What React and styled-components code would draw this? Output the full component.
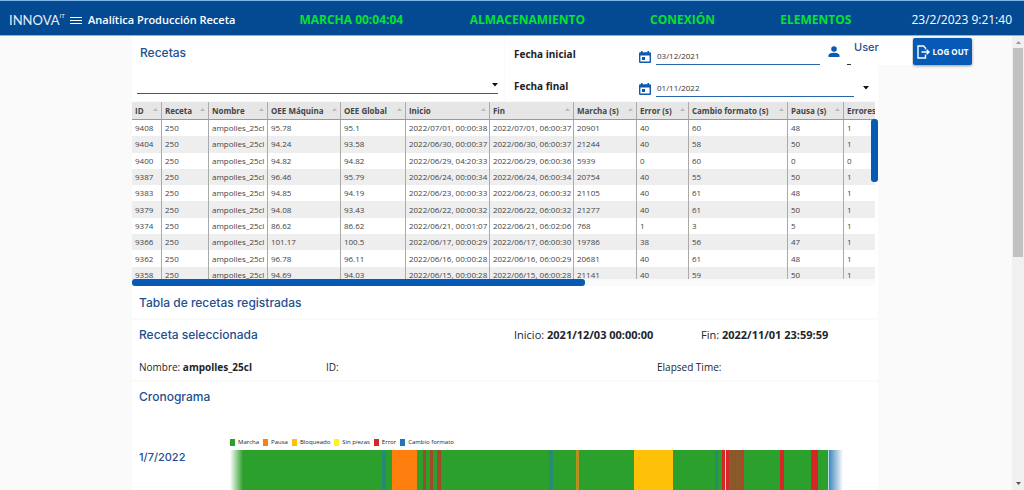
import React from "react";
import styled, { createGlobalStyle } from "styled-components";

const sans = '"Open Sans", "Noto Sans", sans-serif';
const display = 'Inter, "Open Sans", sans-serif';

const GlobalStyle = createGlobalStyle`
  *, *::before, *::after { box-sizing: border-box; }
  body { margin: 0; background: #fafafa; font-family: ${sans}; font-size: 11px; color: #212529; }
  h1, h2, p, dl, dd { margin: 0; }
`;

const Page = styled.div`
  display: flex;
  flex-direction: column;
  height: 100vh;
`;

const TopBar = styled.header`
  display: flex;
  align-items: center;
  flex: none;
  height: 36px;
  padding: 4px 12px 0 9px;
  background: #034a92;
  border-top: 1px solid #7fb4e6;
  border-bottom: 1px solid #7fb4e6;
  color: #fff;
`;

const Logo = styled.a`
  display: flex;
  align-items: flex-start;
  width: 55px;
  color: #e6eef8;
  font: 400 13px/16px Lato, sans-serif;
  text-decoration: none;
  white-space: nowrap;
`;

const LogoMark = styled.small`
  font-size: 6px;
  line-height: 8px;
`;

const MenuButton = styled.button`
  display: flex;
  width: 24px;
  padding: 0 6px;
  border: 0;
  background: none;
  color: #fff;
`;

const PageTitle = styled.h1`
  flex: none;
  font-size: 11px;
  font-weight: 600;
  line-height: 16px;
`;

const StatusBar = styled.nav`
  display: grid;
  grid-template-columns: 170fr 180fr 130fr 131fr;
  flex: 1;
  padding-left: 64px;
`;

const Status = styled.span`
  color: #05e32f;
  font-size: 12px;
  font-weight: 700;
  line-height: 16px;
  white-space: nowrap;
`;

const Clock = styled.time`
  font-size: 12px;
  line-height: 16px;
`;

const Body = styled.div`
  position: relative;
  display: flex;
  flex: 1;
  min-height: 0;
`;

const Scroller = styled.div`
  flex: 1;
  min-width: 0;
  padding: 0 134px 0 132px;
  overflow: auto;
  scrollbar-width: none;
`;

const Content = styled.main`
  display: flex;
  flex-direction: column;
  gap: 2px;
`;

const Card = styled.section`
  background: #fff;
`;

const Filters = styled.div`
  display: grid;
  grid-template-columns: 372fr 373fr;
  gap: 1px;
  height: 64px;
`;

const FilterCard = styled(Card)`
  display: flex;
  flex-direction: column;
  justify-content: space-between;
  padding: 9px 6px 7px 5px;
`;

const Title = styled.h2`
  color: #234f8f;
  font: 500 12px/16px ${display};
`;

const FilterTitle = styled(Title)`
  padding-left: 3px;
`;

const SelectBox = styled.div`
  display: flex;
  align-items: center;
  border-bottom: 1px solid #555;
`;

const RecipeSelect = styled.select`
  appearance: none;
  flex: 1;
  height: 17px;
  border: 0;
  background: none;
  font: 11px ${sans};
`;

const DateCard = styled(Card)`
  display: flex;
  flex-direction: column;
  gap: 13px;
  padding: 10px 6px 4px 9px;
`;

const DateRow = styled.div`
  display: flex;
  align-items: flex-start;
  height: 19px;
`;

const DateLabel = styled.label`
  width: 125px;
  color: #222;
  font-size: 10px;
  font-weight: 700;
  line-height: 16px;
`;

const CalendarIcon = styled.svg`
  width: 12px;
  height: 14px;
  margin: 4px 5px 0 0;
  fill: #0b5ab0;
`;

const DateInput = styled.input`
  flex: 1;
  min-width: 0;
  height: 19px;
  margin-right: ${(p) => (p.$short ? "52px" : "9px")};
  padding: 0 1px;
  border: 0;
  border-bottom: 1px solid #2865ab;
  background: none;
  color: #333;
  font: 8px ${sans};
`;

const Caret = styled.svg`
  width: 6px;
  height: 4px;
  margin: ${(p) => (p.$low ? "8px 3px 0 0" : "0")};
  fill: #111;
`;

const UserPanel = styled.aside`
  position: absolute;
  top: 1px;
  right: 52px;
  display: flex;
  align-items: flex-start;
  gap: 1px;
`;

const User = styled.div`
  position: relative;
  display: flex;
  align-items: flex-start;
  width: 84px;
  height: 28px;
  background: #fff;
  color: #234f8f;
  font: 500 11px/20px ${display};
  &::after {
    position: absolute;
    bottom: 0;
    left: 19px;
    width: 4px;
    height: 1px;
    background: #333;
    content: "";
  }
`;

const UserIcon = styled.svg`
  width: 12px;
  height: 12px;
  margin: 9px 14px 0 0;
  fill: #0b5ab0;
`;

const LogoutButton = styled.button`
  display: flex;
  align-items: center;
  justify-content: center;
  gap: 3px;
  width: 59px;
  height: 27px;
  margin-top: 1px;
  padding: 0;
  border: 0;
  border-radius: 2px;
  background: #0659b5;
  box-shadow: 0 1px 3px rgba(0, 0, 0, 0.4);
  color: #fff;
  font: 700 8px/12px ${sans};
  white-space: nowrap;
`;

const TableCard = styled(Card)`
  padding-right: 3px;
`;

const TableView = styled.div`
  position: relative;
  height: 177px;
  overflow: hidden;
`;

const Table = styled.table`
  width: 100%;
  height: 181px;
  border-collapse: separate;
  border-spacing: 0;
  table-layout: fixed;
  color: #444;
  font-size: 8px;
  line-height: 12px;
`;

const HeadCell = styled.th`
  height: 18px;
  padding: 0 3px;
  background: #e6e6e6;
  border-right: 1px solid #aaa;
  border-bottom: 1px solid #999;
  text-align: left;
  white-space: nowrap;
  &:last-child { border-right: 0; }
`;

const HeadLabel = styled.span`
  display: flex;
  align-items: center;
  justify-content: space-between;
`;

const SortIcon = styled.svg`
  flex: none;
  width: 5px;
  height: 3px;
  margin-bottom: 2px;
  fill: #bbb;
`;

const Row = styled.tr`
  background: #fff;
  &:nth-child(even) { background: #eee; }
`;

const Cell = styled.td`
  padding: 0 0 0 3px;
  border-right: 1px solid #aaa;
  overflow: hidden;
  white-space: nowrap;
  &:last-child { border-right: 0; }
`;

const VerticalThumb = styled.div`
  position: absolute;
  top: 17px;
  right: -3px;
  width: 7px;
  height: 63px;
  border-radius: 3px;
  background: #0659b5;
`;

const TableFrame = styled.div`
  position: relative;
`;

const HorizontalTrack = styled.div`
  height: 7px;
  background: #fafafa;
`;

const HorizontalThumb = styled.div`
  width: 61%;
  height: 7px;
  border-radius: 3px;
  background: #0659b5;
`;

const TableCaption = styled(Title)`
  padding: 9px 7px 7px;
`;

const Selected = styled(Card)`
  display: flex;
  flex-direction: column;
  gap: 16px;
  padding: 7px 8px 5px 7px;
`;

const DetailRow = styled.div`
  display: grid;
  grid-template-columns: ${(p) => p.$columns};
  font-size: ${(p) => (p.$small ? "10px" : "11px")};
`;

const Detail = styled.p`
  line-height: 16px;
  white-space: nowrap;
`;

const Timeline = styled(Card)`
  padding: 7px 8px 40px 7px;
`;

const TimelineGrid = styled.div`
  display: grid;
  grid-template-columns: 91px 1fr;
  padding: 31px 27px 0 0;
`;

const Legend = styled.ul`
  display: flex;
  grid-column: 2;
  gap: 4px;
  margin: 0;
  padding: 0;
  list-style: none;
  font-size: 6px;
  line-height: 12px;
`;

const LegendItem = styled.li`
  display: flex;
  align-items: center;
  gap: 3px;
  white-space: nowrap;
  &::before {
    width: 5px;
    height: 7px;
    background: ${(p) => p.$color};
    content: "";
  }
`;

const Day = styled.h2`
  grid-column: 1;
  padding-top: 1px;
  color: #234f8f;
  font: 500 11px/16px ${display};
`;

const Chart = styled.svg`
  display: block;
  width: 100%;
  height: 100px;
  margin-top: 2px;
`;

const ScrollBar = styled.div`
  display: flex;
  flex-direction: column;
  align-items: center;
  width: 12px;
  padding: 5px 0;
  background: #f0f0f0;
`;

const ScrollThumb = styled.div`
  width: 10px;
  height: 47%;
  margin: 4px 0 auto;
  background: #c1c1c1;
`;

const ScrollArrow = styled.svg`
  width: 5px;
  height: 3px;
  fill: ${(p) => p.$color};
`;

const columns = [
  ["ID", 30], ["Receta", 47], ["Nombre", 59], ["OEE Máquina", 73], ["OEE Global", 65],
  ["Inicio", 84], ["Fin", 84], ["Marcha (s)", 63], ["Error (s)", 52],
  ["Cambio formato (s)", 99], ["Pausa (s)", 56], ["Errores", 31],
];

const rows = [
  [9408, "95.78", "95.1", "07/01, 00:00:38", "07/01, 06:00:37", 20901, 40, 60, 48, 1],
  [9404, "94.24", "93.58", "06/30, 00:00:37", "06/30, 06:00:37", 21244, 40, 58, 50, 1],
  [9400, "94.82", "94.82", "06/29, 04:20:33", "06/29, 06:00:36", 5939, 0, 60, 0, 0],
  [9387, "96.46", "95.79", "06/24, 00:00:34", "06/24, 06:00:34", 20754, 40, 55, 50, 1],
  [9383, "94.85", "94.19", "06/23, 00:00:33", "06/23, 06:00:32", 21105, 40, 61, 48, 1],
  [9379, "94.08", "93.43", "06/22, 00:00:32", "06/22, 06:00:32", 21277, 40, 61, 50, 1],
  [9374, "86.62", "86.62", "06/21, 00:01:07", "06/21, 06:02:06", 768, 1, 3, 5, 1],
  [9366, "101.17", "100.5", "06/17, 00:00:29", "06/17, 06:00:30", 19786, 38, 56, 47, 1],
  [9362, "96.78", "96.11", "06/16, 00:00:28", "06/16, 06:00:29", 20681, 40, 61, 48, 1],
  [9358, "94.69", "94.03", "06/15, 00:00:28", "06/15, 06:00:28", 21141, 40, 59, 50, 1],
].map(([id, machine, total, start, end, ...rest]) => [
  id, 250, "ampolles_25cl", machine, total, `2022/${start}`, `2022/${end}`, ...rest,
]);

const legend = [
  ["Marcha", "#2ca02c"], ["Pausa", "#ff7f0e"], ["Bloqueado", "#ffc107"],
  ["Sin piezas", "#fff01f"], ["Error", "#d62728"], ["Cambio formato", "#1f77b4"],
];

/* start, width and colour of each stop in the day */
const events = [
  [152, 4, "#278a75"], [162, 25, "#ff7f0e"], [193, 3, "#a2492b"], [200, 3, "#a2492b"],
  [207, 4, "#a2492b"], [319, 4, "#278a75"], [346, 3, "#b8901d"], [404, 39, "#ffc107"],
  [485, 3, "#278a75"], [492, 7, "#d62728"], [495, 1, "#ffd0d0"], [499, 15, "#8b5a2a"],
  [501, 1, "#b8402a"], [505, 1, "#b8402a"], [509, 1, "#b8402a"], [512, 2, "#b8402a"],
  [550, 4, "#d62728"], [581, 7, "#d62728"], [598, 1, "#b5dbe6"],
];

function Calendar() {
  return (
    <CalendarIcon viewBox="0 0 12 14" aria-hidden="true">
      <path fillRule="evenodd" d="M2 1h1.5v1.2h5V1H10v1.2h.8A1.2 1.2 0 0 1 12 3.400v8.400A1.200 1.200 0 0 1 10.800 13H1.200A1.200 1.200 0 0 1 0 11.800V3.400A1.200 1.200 0 0 1 1.200 2.200H2zM1.400 5.500v6.100h9.200V5.500zM3 7h3v3H3z" />
    </CalendarIcon>
  );
}

export default function App() {
  return (
    <Page>
      <GlobalStyle />
      <TopBar>
        <Logo href="#" aria-label="INNOVA IT">INNOVA<LogoMark>IT</LogoMark></Logo>
        <MenuButton aria-label="Menú">
          <svg width="12" height="9" viewBox="0 0 12 9" stroke="#fff" aria-hidden="true">
            <path d="M0 1.500h12M0 4.500h12M0 7.500h12" />
          </svg>
        </MenuButton>
        <PageTitle>Analítica Producción Receta</PageTitle>
        <StatusBar>
          <Status>MARCHA 00:04:04</Status>
          <Status>ALMACENAMIENTO</Status>
          <Status>CONEXIÓN</Status>
          <Status>ELEMENTOS</Status>
        </StatusBar>
        <Clock>23/2/2023 9:21:40</Clock>
      </TopBar>
      <Body>
        <Scroller>
          <Content>
            <Filters>
              <FilterCard>
                <FilterTitle as="label" htmlFor="recipe">Recetas</FilterTitle>
                <SelectBox>
                  <RecipeSelect id="recipe" defaultValue=""><option value="" /></RecipeSelect>
                  <Caret viewBox="0 0 6 4"><path d="M0 0h6L3 3.500z" /></Caret>
                </SelectBox>
              </FilterCard>
              <DateCard>
                <DateRow>
                  <DateLabel htmlFor="from">Fecha inicial</DateLabel>
                  <Calendar />
                  <DateInput id="from" $short defaultValue="03/12/2021" />
                </DateRow>
                <DateRow>
                  <DateLabel htmlFor="to">Fecha final</DateLabel>
                  <Calendar />
                  <DateInput id="to" defaultValue="01/11/2022" />
                  <Caret $low viewBox="0 0 6 4"><path d="M0 0h6L3 3.500z" /></Caret>
                </DateRow>
              </DateCard>
            </Filters>
            <TableCard>
              <TableFrame>
                <TableView>
                  <Table>
                    <colgroup>
                      {columns.map(([name, width]) => <col key={name} style={{ width: `${width / 7.43}%` }} />)}
                    </colgroup>
                    <thead>
                      <tr>
                        {columns.map(([name]) => (
                          <HeadCell key={name}>
                            <HeadLabel>
                              {name}
                              {name !== "Errores" && <SortIcon viewBox="0 0 5 3"><path d="M0 3h5L2.500 0z" /></SortIcon>}
                            </HeadLabel>
                          </HeadCell>
                        ))}
                      </tr>
                    </thead>
                    <tbody>
                      {rows.map((row) => (
                        <Row key={row[0]}>{row.map((value, i) => <Cell key={i}>{value}</Cell>)}</Row>
                      ))}
                    </tbody>
                  </Table>
                </TableView>
                <VerticalThumb />
              </TableFrame>
              <HorizontalTrack><HorizontalThumb /></HorizontalTrack>
              <TableCaption>Tabla de recetas registradas</TableCaption>
            </TableCard>
            <Selected>
              <DetailRow $columns="375fr 187fr 169fr">
                <Title>Receta seleccionada</Title>
                <Detail>Inicio: <b>2021/12/03 00:00:00</b></Detail>
                <Detail>Fin: <b>2022/11/01 23:59:59</b></Detail>
              </DetailRow>
              <DetailRow $small $columns="187fr 331fr 213fr">
                <Detail>Nombre: <b>ampolles_25cl</b></Detail>
                <Detail>ID:</Detail>
                <Detail>Elapsed Time:</Detail>
              </DetailRow>
            </Selected>
            <Timeline>
              <Title>Cronograma</Title>
              <TimelineGrid>
                <Legend>
                  {legend.map(([name, color]) => <LegendItem key={name} $color={color}>{name}</LegendItem>)}
                </Legend>
                <Day>1/7/2022</Day>
                <Chart viewBox="0 0 613 100" preserveAspectRatio="none" role="img" aria-label="Cronograma 1/7/2022">
                  <defs>
                    <linearGradient id="fade-in">
                      <stop offset="0" stopColor="#fff" />
                      <stop offset="1" stopColor="#2ca02c" />
                    </linearGradient>
                    <linearGradient id="fade-out">
                      <stop offset="0" stopColor="#3f86bd" />
                      <stop offset="1" stopColor="#fff" />
                    </linearGradient>
                  </defs>
                  <rect width="599" height="100" fill="#2ca02c" />
                  <rect width="13" height="100" fill="url(#fade-in)" />
                  {events.map(([x, width, color]) => (
                    <rect key={x} x={x} width={width} height="100" fill={color} />
                  ))}
                  <rect x="599" width="14" height="100" fill="url(#fade-out)" />
                </Chart>
              </TimelineGrid>
            </Timeline>
          </Content>
        </Scroller>
        <ScrollBar aria-hidden="true">
          <ScrollArrow $color="#999" viewBox="0 0 5 3"><path d="M0 3h5L2.500 0z" /></ScrollArrow>
          <ScrollThumb />
          <ScrollArrow $color="#555" viewBox="0 0 5 3"><path d="M0 0h5L2.500 3z" /></ScrollArrow>
        </ScrollBar>
        <UserPanel>
          <User>
            <UserIcon viewBox="0 0 12 12" aria-hidden="true">
              <circle cx="6" cy="3" r="2.800" />
              <path d="M.5 11V9.500C.5 7.500 4 6.800 6 6.800s5.500.7 5.500 2.700V11z" />
            </UserIcon>
            User
          </User>
          <LogoutButton>
            <svg width="13" height="14" viewBox="0 0 13 14" fill="none" stroke="#fff" strokeWidth="1.400" aria-hidden="true">
              <path d="M8.500 4.500V3L6.500 1H1v12h7.500V9.500M4.500 7h7.500M9.700 4.700 12 7 9.700 9.300" />
            </svg>
            LOG OUT
          </LogoutButton>
        </UserPanel>
      </Body>
    </Page>
  );
}
